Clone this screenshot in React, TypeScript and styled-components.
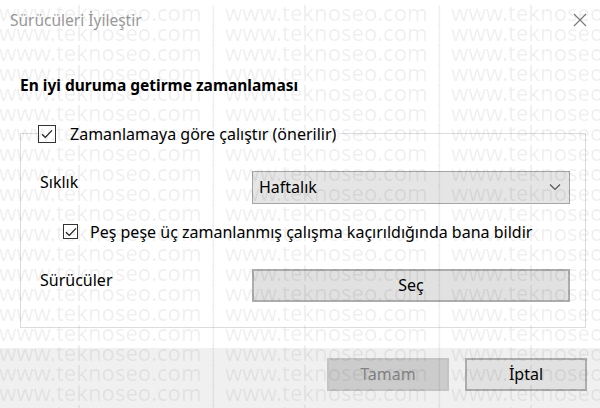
import React from 'react'
import styled, { createGlobalStyle } from 'styled-components'

const GlobalStyle = createGlobalStyle`
  html, body {
    margin: 0;
    padding: 0;
    background: #fff;
  }
  body {
    font-family: "Segoe UI", "Noto Sans", "Open Sans", sans-serif;
    color: #000;
  }
`

const Dialog = styled.div`
  position: relative;
  width: 600px;
  height: 408px;
  display: flex;
  flex-direction: column;
  background: #fff;
  overflow: hidden;
`

const TitleBar = styled.div`
  height: 40px;
  display: flex;
  align-items: center;
  justify-content: space-between;
  padding: 0 12px 0 10px;
  color: #9a9a9a;
  font-size: 15.5px;
`

const CloseButton = styled.button`
  width: 16px;
  height: 16px;
  padding: 0;
  border: none;
  background: none;
  display: flex;
  align-items: center;
  justify-content: center;
  color: #777;
`

const Body = styled.div`
  flex: 1;
  padding: 0 14px 20px 20px;
  display: flex;
  flex-direction: column;
`

const Heading = styled.div`
  margin-top: 35px;
  font-size: 15.5px;
  font-weight: 700;
  line-height: 20px;
`

const GroupBox = styled.fieldset`
  margin: 29px 0 0 0;
  padding: 27px 15px 25px 19px;
  border: 1px solid #dcdcdc;
  min-width: 0;
`

const Legend = styled.legend`
  margin-left: -2px;
  padding: 0 4px 0 0;
`

const CheckRow = styled.label<{ $indent?: number }>`
  display: flex;
  align-items: center;
  gap: ${({ $indent }) => ($indent ? 12 : 14)}px;
  padding-left: ${({ $indent }) => $indent || 0}px;
  font-size: 16px;
  line-height: 20px;
`

const Box = styled.span<{ $size: number }>`
  width: ${({ $size }) => $size}px;
  height: ${({ $size }) => $size}px;
  box-sizing: border-box;
  border: 1px solid #333;
  background: #fff;
  display: flex;
  align-items: center;
  justify-content: center;
  flex-shrink: 0;
`

const FieldRow = styled.div`
  display: grid;
  grid-template-columns: 212px 1fr;
  align-items: start;
`

const FieldLabel = styled.div`
  font-size: 16px;
  line-height: 20px;
  padding-top: 1px;
`

const Select = styled.div`
  height: 33px;
  box-sizing: border-box;
  border: 1px solid #a5a5a5;
  background: #e5e5e5;
  display: flex;
  align-items: center;
  justify-content: space-between;
  padding: 0 8px 0 6px;
  font-size: 16px;
`

const WideButton = styled.button`
  width: 100%;
  height: 33px;
  box-sizing: border-box;
  border: 2px solid #adadad;
  background: #e1e1e1;
  font-family: inherit;
  font-size: 16px;
  color: #000;
`

const Footer = styled.div`
  height: 61px;
  background: #f0f0f0;
  display: flex;
  align-items: center;
  justify-content: flex-end;
  gap: 16px;
  padding: 0 13px 7px 0;
  box-sizing: border-box;
`

const DialogButton = styled.button<{ $disabled?: boolean }>`
  width: 122px;
  height: 33px;
  box-sizing: border-box;
  border: 2px solid ${({ $disabled }) => ($disabled ? '#c4c4c4' : '#adadad')};
  background: ${({ $disabled }) => ($disabled ? '#cccccc' : '#e1e1e1')};
  color: ${({ $disabled }) => ($disabled ? '#838383' : '#000')};
  font-family: inherit;
  font-size: 16px;
`

const Gap = styled.div<{ $h: number }>`
  height: ${({ $h }) => $h}px;
`

const Watermark = styled.div`
  position: absolute;
  inset: 0;
  pointer-events: none;
  padding-top: 2px;
  font-family: "Noto Sans", "Open Sans", sans-serif;
  font-size: 22px;
  line-height: 20px;
  color: rgba(0, 0, 0, 0.07);
  white-space: nowrap;
  overflow: hidden;
`

const WatermarkRow = styled.div`
  height: 20px;
  margin-left: -1px;
`

function Check() {
  return (
    <svg width="12" height="10" viewBox="0 0 12 10" fill="none">
      <path d="M1 5.2 L4.3 8.4 L11 1.4" stroke="#222" strokeWidth="1.3" />
    </svg>
  )
}

function Chevron() {
  return (
    <svg width="12" height="8" viewBox="0 0 12 8" fill="none">
      <path d="M1 1.5 L6 6.5 L11 1.5" stroke="#555" strokeWidth="1.2" />
    </svg>
  )
}

const WATERMARK = 'www.teknoseo.com | www.teknoseo.com | www.teknoseo.com | www.teknoseo.com'

export default function App() {
  return (
    <>
      <GlobalStyle />
      <Dialog>
        <TitleBar>
          <span>Sürücüleri İyileştir</span>
          <CloseButton type="button" aria-label="Kapat">
            <svg width="14" height="14" viewBox="0 0 14 14">
              <path d="M1 1 L13 13 M13 1 L1 13" stroke="#777" strokeWidth="1.1" />
            </svg>
          </CloseButton>
        </TitleBar>

        <Body>
          <Heading>En iyi duruma getirme zamanlaması</Heading>

          <GroupBox>
            <Legend>
              <CheckRow>
                <Box $size={18}><Check /></Box>
                Zamanlamaya göre çalıştır (önerilir)
              </CheckRow>
            </Legend>

            <FieldRow>
              <FieldLabel>Sıklık</FieldLabel>
              <Select>
                <span>Haftalık</span>
                <Chevron />
              </Select>
            </FieldRow>

            <Gap $h={18} />

            <CheckRow $indent={23}>
              <Box $size={15}><Check /></Box>
              Peş peşe üç zamanlanmış çalışma kaçırıldığında bana bildir
            </CheckRow>

            <Gap $h={27} />

            <FieldRow>
              <FieldLabel>Sürücüler</FieldLabel>
              <WideButton type="button">Seç</WideButton>
            </FieldRow>
          </GroupBox>
        </Body>

        <Footer>
          <DialogButton type="button" $disabled disabled>Tamam</DialogButton>
          <DialogButton type="button">İptal</DialogButton>
        </Footer>

        <Watermark>
          {Array.from({ length: 21 }, (_, i) => (
            <WatermarkRow key={i}>{WATERMARK}</WatermarkRow>
          ))}
        </Watermark>
      </Dialog>
    </>
  )
}
